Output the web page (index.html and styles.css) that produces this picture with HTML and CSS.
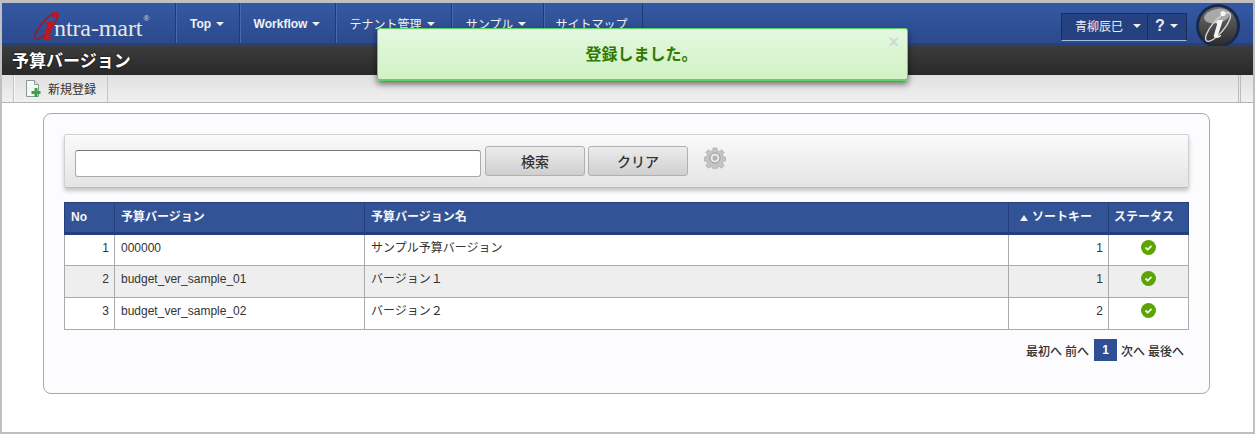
FILE: index.html
```html
<!DOCTYPE html>
<html lang="ja">
<head>
<meta charset="utf-8">
<title>予算バージョン</title>
<link rel="stylesheet" href="styles.css">
</head>
<body>
<div class="frame">
  <header class="topbar">
    <div class="logo">
      <svg class="logo-mark" width="30" height="32" viewBox="0 0 30 32"><ellipse cx="13.500" cy="15" rx="5" ry="17" transform="rotate(40 13.500 15)" fill="none" stroke="#a8141a" stroke-width="1.500"/><path d="M15 10h6l-5 16c-.4 1.500.8 1.500 2.500 0l.8.8c-2.500 2.800-9 3.400-8.300-.4l3.200-13.400-2-.6z" fill="#c8141c"/><circle cx="22" cy="4" r="3" fill="#c8141c"/></svg>
      <span class="logo-text">ntra-mart</span><sup class="logo-reg">®</sup>
    </div>
    <nav class="nav">
      <a class="nav-item w-top">Top <i class="caret"></i></a>
      <a class="nav-item w-wf">Workflow <i class="caret"></i></a>
      <a class="nav-item w-tn">テナント管理 <i class="caret"></i></a>
      <a class="nav-item w-sm">サンプル <i class="caret"></i></a>
      <a class="nav-item w-map">サイトマップ</a>
    </nav>
    <div class="user-box">
      <span class="user-name">青柳辰巳 <i class="caret"></i></span>
      <span class="user-help">? <i class="caret"></i></span>
    </div>
    <div class="orb">
      <svg width="44" height="44" viewBox="0 0 44 44"><defs><linearGradient id="orbg" x1="0" y1="0" x2="0" y2="1"><stop offset="0" stop-color="#6e6e6e"/><stop offset="1" stop-color="#2c2c2c"/></linearGradient></defs><circle cx="22" cy="22" r="22" fill="#18294f"/><circle cx="22" cy="22" r="19" fill="url(#orbg)"/><ellipse cx="21" cy="12" rx="13" ry="7" fill="#a9a9a9" transform="rotate(-12 21 12)"/><ellipse cx="22" cy="23" rx="6" ry="18" transform="rotate(40 22 23)" fill="none" stroke="#d8d8d8" stroke-width="1.400"/><path d="M22 16h5l-5 15c-.4 1.500 1 1.500 2.500 0l.8.8c-2.500 3-8.300 3-7.500-.2l3.500-12-2-.6z" fill="#f4f4f4"/><circle cx="27" cy="9.500" r="2.600" fill="#f4f4f4"/></svg>
    </div>
  </header>
  <div class="titlebar"><h1 class="page-title">予算バージョン</h1></div>
  <div class="toolbar">
    <a class="tool-btn">
      <svg width="16" height="18" viewBox="0 0 16 18"><path d="M1.500.5h8l4 4v12h-12z" fill="#f4f8f8" stroke="#8a9a9a"/><path d="M9.500.5v4h4" fill="#dfe8e8" stroke="#8a9a9a"/><path d="M10 9.500h3v3h3v3h-3v3h-3v-3H7v-3h3z" fill="#3aa53a" transform="translate(-.5 -1.500)"/></svg>
      <span>新規登録</span>
    </a>
    <span class="tool-end"></span>
  </div>
  <main class="content">
    <section class="panel">
      <form class="search">
        <input class="search-input" type="text" aria-label="検索">
        <button class="btn" type="button">検索</button>
        <button class="btn" type="button">クリア</button>
        <svg class="gear" width="22" height="22" viewBox="0 0 24 24"><path fill="#c4c4c4" stroke="#a0a0a0" stroke-width=".6" d="M10 1h4l.6 3 2 .8 2.600-1.700 2.800 2.800-1.700 2.600.8 2 3 .6v4l-3 .6-.8 2 1.700 2.600-2.800 2.800-2.600-1.700-2 .8-.6 3h-4l-.6-3-2-.8-2.600 1.700-2.800-2.800 1.700-2.600-.8-2-3-.6v-4l3-.6.8-2L1.900 5.900l2.800-2.800 2.600 1.700 2-.8z"/><circle cx="12" cy="12" r="5.500" fill="#ececec" stroke="#8e8e8e"/><circle cx="12" cy="12" r="2.800" fill="#b4b4b4"/></svg>
      </form>
      <table class="grid">
        <thead>
          <tr>
            <th class="c-no">No</th>
            <th class="c-code">予算バージョン</th>
            <th class="c-name">予算バージョン名</th>
            <th class="c-sort"><i class="sort-arrow"></i>ソートキー</th>
            <th class="c-status">ステータス</th>
          </tr>
        </thead>
        <tbody>
          <tr><td class="num">1</td><td>000000</td><td>サンプル予算バージョン</td><td class="num">1</td><td class="mid"><svg class="ok" width="15" height="15" viewBox="0 0 15 15"><circle cx="7.500" cy="7.500" r="7.500" fill="#5ca500"/><path d="M4.500 7.500l2.200 2.200 3.800-3.800" fill="none" stroke="#eef6e0" stroke-width="1.800"/></svg></td></tr>
          <tr class="alt"><td class="num">2</td><td>budget_ver_sample_01</td><td>バージョン１</td><td class="num">1</td><td class="mid"><svg class="ok" width="15" height="15" viewBox="0 0 15 15"><circle cx="7.500" cy="7.500" r="7.500" fill="#5ca500"/><path d="M4.500 7.500l2.200 2.200 3.800-3.800" fill="none" stroke="#eef6e0" stroke-width="1.800"/></svg></td></tr>
          <tr><td class="num">3</td><td>budget_ver_sample_02</td><td>バージョン２</td><td class="num">2</td><td class="mid"><svg class="ok" width="15" height="15" viewBox="0 0 15 15"><circle cx="7.500" cy="7.500" r="7.500" fill="#5ca500"/><path d="M4.500 7.500l2.200 2.200 3.800-3.800" fill="none" stroke="#eef6e0" stroke-width="1.800"/></svg></td></tr>
        </tbody>
      </table>
      <div class="pager">
        <span class="pg-first">最初へ</span><span>前へ</span><b class="page-cur">1</b><span>次へ</span><span>最後へ</span>
      </div>
    </section>
  </main>
  <div class="toast">
    <span class="toast-text">登録しました。</span>
    <span class="toast-close">×</span>
  </div>
</div>
</body>
</html>
```
FILE: styles.css
```css
* { box-sizing: border-box; }
html, body { margin: 0; padding: 0; }
body {
  font-family: "Liberation Sans", "Noto Sans CJK JP", sans-serif;
  font-size: 12px;
  color: #333;
  background: #fff;
}
.frame {
  position: relative;
  width: 1255px;
  height: 434px;
  border: 2px solid #c0c0c0;
  border-top-width: 3px;
  overflow: hidden;
  display: flex;
  flex-direction: column;
}
.topbar {
  height: 43px;
  flex: none;
  display: flex;
  align-items: stretch;
  background: linear-gradient(#3459a4, #2c4a8c);
  border-bottom: 3px solid #24417e;
}
.logo {
  width: 173px;
  flex: none;
  display: flex;
  align-items: center;
  padding: 0 0 0 31px;
  color: #e8e8e8;
}
.logo-mark { margin-right: -9px; flex: none; margin-top: 8px; }
.logo-text {
  font-family: "Liberation Serif", serif;
  font-size: 24px;
  letter-spacing: -.1px;
  color: #e6e6e6;
  margin-top: 10px;
}
.logo-reg { font-size: 8px; margin: -10px 0 0 1px; color: #ddd; }
.nav { display: flex; flex: none; }
.nav-item {
  display: flex;
  align-items: center;
  gap: 5px;
  justify-content: center;
  height: 40px;
  padding-top: 1px;
  padding-right: 1px;
  border-left: 1px solid #1f3a75;
  box-shadow: inset 1px 0 0 #4669b0;
  color: #f2f2f2;
  font-weight: bold;
  font-size: 12px;
  white-space: nowrap;
}
.nav-item:last-child { border-right: 1px solid #1f3a75; }
.w-top { width: 64px; }
.w-wf { width: 96px; }
.w-tn { width: 116px; font-weight: normal; padding-right: 3px; }
.w-sm { width: 92px; font-weight: normal; padding-right: 3px; }
.w-map { width: 100px; font-weight: normal; padding-right: 3px; }
.caret {
  display: inline-block;
  width: 0;
  height: 0;
  border-left: 4px solid transparent;
  border-right: 4px solid transparent;
  border-top: 4px solid #f0f0f0;
  vertical-align: middle;
}
.user-box {
  margin: 10px 0 0 auto;
  height: 28px;
  width: 126px;
  flex: none;
  display: flex;
  background: #25417f;
  border: 1px solid #1a2d5c;
  border-bottom: 1px solid #a9bcdc;
  color: #e8edf5;
}
.user-name {
  width: 86px;
  padding: 0 0 3px 13px;
  display: flex;
  align-items: center;
  gap: 10px;
  font-size: 12px;
  border-right: 1px solid #1a2d5c;
  white-space: nowrap;
}
.user-help {
  flex: 1;
  display: flex;
  align-items: center;
  gap: 5px;
  padding: 0 0 3px 7px;
  font-size: 16px;
  font-weight: bold;
}
.orb { margin: 0 13px 0 9px; padding-top: 1px; flex: none; }
.titlebar {
  height: 29px;
  flex: none;
  background: linear-gradient(#3c3c3c, #292929);
  display: flex;
  align-items: center;
  padding-left: 10px;
}
.page-title {
  margin: 0;
  font-size: 17px;
  font-weight: bold;
  color: #fff;
  line-height: 1;
  padding-top: 2px;
  text-shadow: 0 0 2px #000;
}
.toolbar {
  height: 28px;
  flex: none;
  background: linear-gradient(#e0e0e0, #f0f0f0);
  border-bottom: 1px solid #b4b4b4;
  display: flex;
  padding-left: 11px;
}
.tool-btn {
  display: flex;
  align-items: center;
  gap: 7px;
  width: 95px;
  padding-left: 11px;
  border-left: 1px solid #c4c4c4;
  border-right: 1px solid #c4c4c4;
  box-shadow: inset 1px 0 0 #f8f8f8;
  font-size: 12px;
  color: #333;
}
.tool-end {
  margin-left: auto;
  border-left: 1px solid #bbb;
  border-right: 1px solid #bbb;
  flex: none;
  width: 3px;
  margin-right: 12px;
}
.content { flex: 1; padding: 10px 43px 0 41px; background: #fff; }
.panel {
  height: 281px;
  background: #fcfcff;
  border: 1px solid #aaa;
  border-radius: 8px;
  padding: 20px;
}
.search {
  height: 54px;
  display: flex;
  align-items: flex-start;
  padding: 11px 0 0 10px;
  background: linear-gradient(#fafafa, #e4e4e4);
  border: 1px solid #d0d0d0;
  border-bottom-color: #bbb;
  border-radius: 2px;
  box-shadow: 0 3px 4px rgba(0,0,0,.22);
}
.search-input {
  width: 406px;
  height: 27px;
  margin-top: 4px;
  border: 1px solid #aaa;
  border-top-color: #777;
  border-radius: 3px;
  background: #fff;
  box-shadow: none;
  outline: none;
}
.btn {
  width: 100px;
  height: 30px;
  margin-left: 4px;
  border: 1px solid #b0b0b0;
  border-radius: 3px;
  background: linear-gradient(#ececec, #cfcfcf);
  font-family: inherit;
  font-size: 14px;
  font-weight: 500;
  color: #333;
  padding: 0;
}
.btn + .btn { margin-left: 3px; }
.gear { margin: 1px 0 0 16px; }
.grid {
  width: 1125px;
  margin-top: 14px;
  border-collapse: collapse;
  table-layout: fixed;
  background: #fff;
}
.grid th {
  height: 31px;
  background: #335397;
  color: #f6f6f6;
  border: 1px solid #233f7c;
  border-bottom-width: 3px;
  text-align: left;
  font-size: 12px;
  line-height: 14px;
  padding: 0 0 1px 6px;
  font-weight: bold;
}
.c-no { width: 50px; }
.c-code { width: 250px; }
.c-name { width: 644px; }
.c-sort { width: 100px; }
.grid th.c-status { padding-left: 5px; }
.grid th.c-sort { padding-left: 11px; }
.sort-arrow {
  display: inline-block;
  border-left: 4px solid transparent;
  border-right: 4px solid transparent;
  border-bottom: 6px solid #f0f0f0;
  margin-right: 4px;
  vertical-align: 0;
}
.grid td {
  height: 32px;
  border: 1px solid #aaa;
  padding: 0 5px 5px 6px;
  font-size: 12px;
  line-height: 14px;
  color: #333;
}
.grid .alt td { background: #eee; }
.grid td.num { text-align: right; }
.grid td.mid { text-align: center; padding: 0 1px 6px 0; }
.ok { display: block; margin: 0 auto; }
.pager {
  display: flex;
  justify-content: flex-end;
  align-items: center;
  gap: 5px;
  margin-top: 9px;
  padding-right: 5px;
  font-weight: 500;
}
.pager span + span { margin-left: -2px; }
.page-cur {
  width: 23px;
  height: 22px;
  background: #2f4f94;
  color: #fff;
  display: flex;
  align-items: center;
  justify-content: center;
  margin: 0 -1px 0 0;
}
.toast {
  position: absolute;
  left: 375px;
  top: 25px;
  width: 531px;
  height: 53px;
  display: flex;
  align-items: center;
  justify-content: center;
  background: linear-gradient(#e4f8e0, #d0f2c4);
  border: 1px solid #5fd065;
  border-bottom-width: 2px;
  border-radius: 3px;
  box-shadow: 0 3px 6px rgba(0,0,0,.55);
}
.toast-text {
  font-size: 16px;
  font-weight: bold;
  color: #2f7a00;
  margin-bottom: 3px;
  margin-right: 2px;
}
.toast-close {
  position: absolute;
  right: 8px;
  top: 4px;
  font-size: 18px;
  font-weight: bold;
  color: #d4d8d4;
  line-height: 1;
}
```
